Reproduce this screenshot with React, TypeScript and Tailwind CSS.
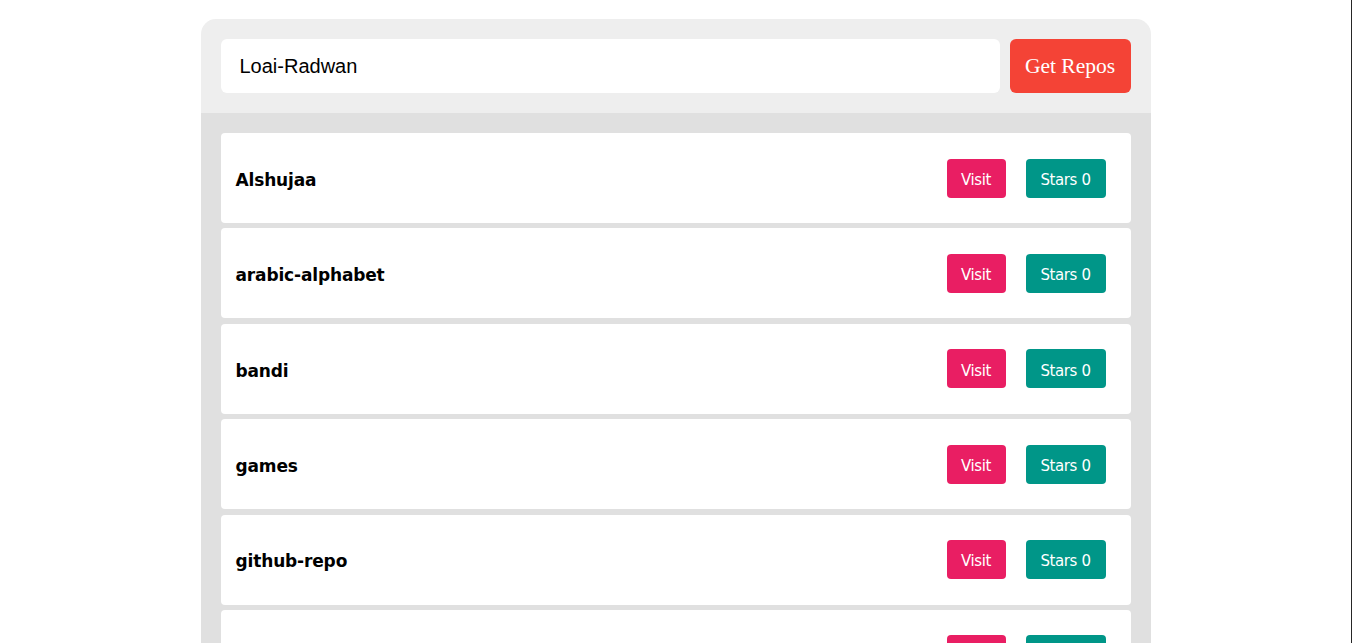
import React from "react";

const repos = ["Alshujaa", "arabic-alphabet", "bandi", "games", "github-repo", "hello-world"];

export default function App() {
  return (
    <div className="w-[1352px] h-[643px] overflow-hidden bg-white border-r border-[#262626]">
      <div className="mx-auto mt-[19px] w-[950px] rounded-t-[15px] overflow-hidden">
        <div className="flex gap-[10px] bg-[#eeeeee] p-[20px]">
          <div className="flex-1 h-[54px] rounded-[6px] bg-white flex items-center pl-[19px] text-[20px] text-black" style={{ fontFamily: "'Liberation Sans', Arial, sans-serif" }}>
            Loai-Radwan
          </div>
          <button className="w-[121px] h-[54px] rounded-[6px] bg-[#f44336] text-white text-[21.5px] pt-[1px]" style={{ fontFamily: "'Liberation Serif', 'Times New Roman', serif" }}>
            Get Repos
          </button>
        </div>
        <div className="bg-[#e0e0e0] px-[20px] pt-[20px] flex flex-col gap-[5.4px]">
          {repos.map((r) => (
            <div key={r} className="h-[90px] shrink-0 rounded-[4px] bg-white flex items-center pl-[15px] pr-[25px]" style={{ fontFamily: "'DejaVu Sans', Verdana, sans-serif" }}>
              <div className="flex-1 font-bold text-[17px] text-black tracking-[-0.15px] pt-[5px]">{r}</div>
              <div className="flex gap-[20px]">
                <div className="w-[59px] h-[39px] rounded-[4px] bg-[#e91e63] text-white text-[15px] flex items-center justify-center tracking-[-0.4px] pt-[4px]">Visit</div>
                <div className="w-[80px] h-[39px] rounded-[4px] bg-[#009688] text-white text-[15px] flex items-center justify-center tracking-[-0.4px] pt-[4px]">Stars 0</div>
              </div>
            </div>
          ))}
        </div>
      </div>
    </div>
  );
}
